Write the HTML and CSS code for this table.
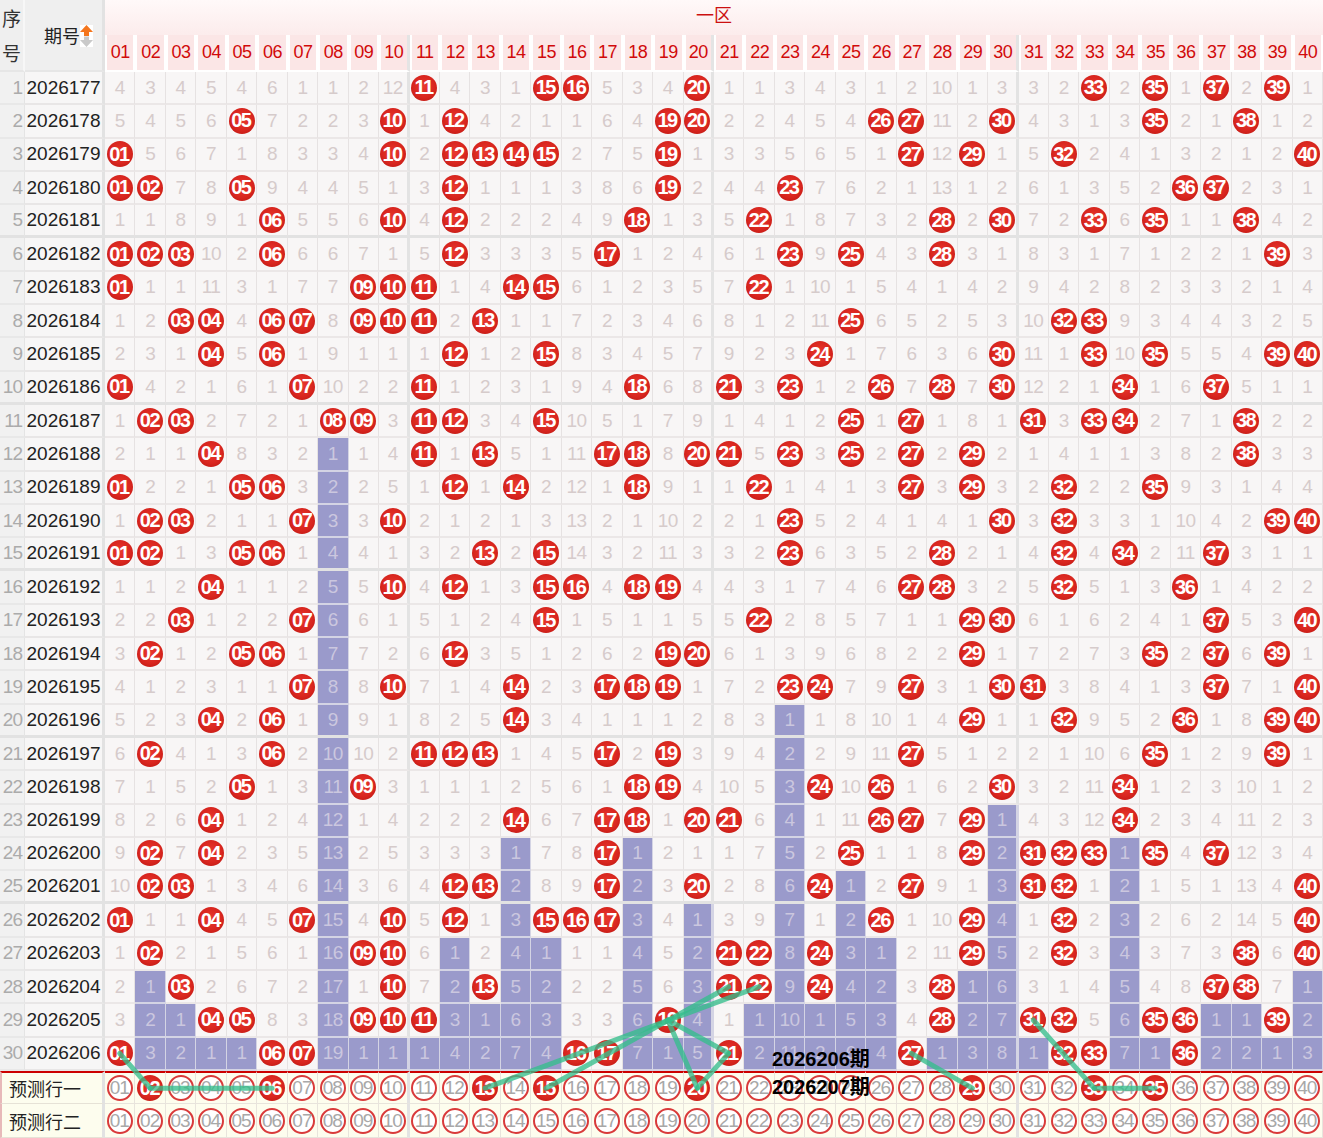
FILE: index.html
```html
<!DOCTYPE html>
<html lang="zh-CN">
<head>
<meta charset="utf-8">
<title>一区 走势图</title>
<link rel="stylesheet" href="styles.css">
</head>
<body>
<div class="chart" id="chart">
  <div class="grid" id="grid">
    <div class="h-seq"><span>序</span><span>号</span></div>
    <div class="h-issue"><span class="h-issue-text">期号</span><svg class="sort" width="13" height="22" viewBox="0 0 13 22"><rect x="0" y="0" width="13" height="22" fill="#ffffff"/><path d="M6.5 0 L13 7 L9 7 L9 11 L4 11 L4 7 L0 7 Z" fill="#f4761e"/><path d="M4 11.5 L9 11.5 L9 15 L13 15 L6.5 22 L0 15 L4 15 Z" fill="#c9c9c9"/></svg></div>
    <div class="h-zone">一区</div>
  </div>
  <svg class="lines" id="lines" width="1323" height="1138"></svg>
  <div class="note"><span>2026206期</span><span>2026207期</span></div>
</div>
<script src="script.js"></script>
</body>
</html>
```
FILE: styles.css
```css
html, body {
  margin: 0;
  padding: 0;
  background: #ffffff;
  overflow: hidden;
}

.chart {
  position: relative;
  width: 1323px;
  height: 1138px;
  font-family: "Liberation Sans", "Noto Sans CJK SC", sans-serif;
}

.grid {
  display: grid;
  width: 1323px;
  grid-template-columns: 25px 80px repeat(40, 1fr);
  grid-template-rows: 35px 37px repeat(30, 33.3px) 33.5px 33.5px;
}

.grid > div {
  box-sizing: border-box;
  display: flex;
  align-items: center;
  justify-content: center;
  overflow: hidden;
  white-space: nowrap;
}

/* header */
.h-seq {
  grid-row: span 2;
  flex-direction: column;
  background: #efefef;
  border-right: 2px solid #f7f7f7;
  border-bottom: 2px solid #e6e6e6;
  font-family: "Noto Sans CJK SC", sans-serif;
  font-size: 19px;
  line-height: 35px;
  color: #333;
}

.h-issue {
  grid-row: span 2;
  justify-content: flex-start !important;
  padding-left: 19px;
  background: #efefef;
  border-right: 3px solid #e2e2e2;
  border-bottom: 2px solid #e6e6e6;
  font-family: "Noto Sans CJK SC", sans-serif;
  font-size: 18px;
  color: #222;
}

.h-issue-text {
  line-height: 22px;
}

.sort {
  margin-left: 0;
  margin-top: 1px;
}

.h-zone {
  grid-column: span 40;
  align-items: flex-start !important;
  padding-top: 2px;
  background: linear-gradient(to bottom, #fff9f9, #fcecec);
  font-family: "Noto Sans CJK SC", sans-serif;
  font-size: 18px;
  line-height: 24px;
  color: #cc1010;
}

.h-num {
  background: #fbe6e6;
  border-left: 2px solid #ffffff;
  border-right: 2px solid #ffffff;
  border-bottom: 2px solid #ffffff;
  font-size: 18px;
  color: #d10a0a;
  letter-spacing: -0.5px;
}

.h-num.g10 {
  border-right: 3px solid #e4e4e4;
}

/* data rows */
.seq {
  justify-content: flex-end !important;
  padding-right: 2px;
  background: #f1f1f1;
  border-right: 1px solid #e4e4e4;
  border-bottom: 2px solid #e8e8e8;
  font-size: 19px;
  letter-spacing: -1px;
  color: #ababab;
}

.iss {
  background: #f7f6f6;
  border-right: 3px solid #e2e2e2;
  border-bottom: 2px solid #e8e6e6;
  font-size: 19px;
  color: #222;
}

.cell {
  background: #f8f6f6;
  border-right: 1px solid #e6e2e2;
  border-bottom: 2px solid #ebe7e7;
  font-size: 19px;
  letter-spacing: -0.5px;
  color: #d6cbcb;
}

.cell.g10,
.pcell.g10 {
  border-right: 3px solid #e3e3e3;
}

.r5 {
  border-bottom: 3px solid #e2e2e2 !important;
}

.cell.miss {
  background: #9a9acb;
  border-right-color: #d4d4e4;
  border-bottom-color: #d4d4e4;
  color: #cbc7df;
}

.ball {
  display: flex;
  align-items: center;
  justify-content: center;
  flex: none;
  width: 26px;
  height: 26px;
  border-radius: 50%;
  background: radial-gradient(circle at 50% 45%, #e8392f 0%, #d9261f 55%, #b5130f 100%);
  color: #ffffff;
  font-weight: bold;
  font-size: 20px;
  letter-spacing: -1.5px;
  text-indent: -1.5px;
}

/* prediction rows */
.plabel {
  grid-column: span 2;
  justify-content: flex-start !important;
  padding-left: 7px;
  background: #fdfdee;
  border-left: 2px solid #e7b9b9;
  border-right: 3px solid #e2e2e2;
  border-bottom: 1px solid #e6e2d6;
  font-family: "Noto Sans CJK SC", sans-serif;
  font-size: 18px;
  color: #222;
}

.pcell {
  background: #fdfdee;
  border-right: 1px solid #e8e4dc;
  border-bottom: 1px solid #e8e4dc;
}

.p1 {
  border-top: 2px solid #cc0000;
}

.ring {
  display: flex;
  align-items: center;
  justify-content: center;
  flex: none;
  box-sizing: border-box;
  width: 26px;
  height: 26px;
  border-radius: 50%;
  border: 2px solid #d93a3a;
  background: #ffffff;
  font-size: 19px;
  letter-spacing: -1px;
  text-indent: -1px;
  color: #a8a8a8;
}

/* overlays */
.lines {
  position: absolute;
  left: 0;
  top: 0;
  pointer-events: none;
}

.trend {
  stroke: rgba(52, 190, 140, 0.78);
  stroke-width: 5;
  stroke-linecap: round;
}

.note {
  position: absolute;
  left: 772px;
  top: 1045px;
  display: flex;
  flex-direction: column;
  font-family: "Liberation Sans", "Noto Sans CJK SC", sans-serif;
  font-weight: bold;
  font-size: 20px;
  line-height: 28px;
  color: #000;
}
```
FILE: script.js
```js
(function () {
  var init = [4,3,4,5,4,6,1,1,2,12,0,4,3,1,0,0,5,3,4,0,1,1,3,4,3,1,2,10,1,3,3,2,0,2,0,1,0,2,0,1];
  var hits = [
    [11,15,16,20,33,35,37,39],
    [5,10,12,19,20,26,27,30,35,38],
    [1,10,12,13,14,15,19,27,29,32,40],
    [1,2,5,12,19,23,36,37],
    [6,10,12,18,22,28,30,33,35,38],
    [1,2,3,6,12,17,23,25,28,39],
    [1,9,10,11,14,15,22],
    [3,4,6,7,9,10,11,13,25,32,33],
    [4,6,12,15,24,30,33,35,39,40],
    [1,7,11,18,21,23,26,28,30,34,37],
    [2,3,8,9,11,12,15,25,27,31,33,34,38],
    [4,11,13,17,18,20,21,23,25,27,29,38],
    [1,5,6,12,14,18,22,27,29,32,35],
    [2,3,7,10,23,30,32,39,40],
    [1,2,5,6,13,15,23,28,32,34,37],
    [4,10,12,15,16,18,19,27,28,32,36],
    [3,7,15,22,29,30,37,40],
    [2,5,6,12,19,20,29,35,37,39],
    [7,10,14,17,18,19,23,24,27,30,31,37,40],
    [4,6,14,29,32,36,39,40],
    [2,6,11,12,13,17,19,27,35,39],
    [5,9,18,19,24,26,30,34],
    [4,14,17,18,20,21,26,27,29,34],
    [2,4,17,25,29,31,32,33,35,37],
    [2,3,12,13,17,20,24,27,31,32,40],
    [1,4,7,10,12,15,16,17,26,29,32,40],
    [2,9,10,21,22,24,29,32,38,40],
    [3,10,13,21,22,24,28,37,38],
    [4,5,9,10,11,19,28,31,32,35,36,39],
    [1,6,7,16,17,21,27,32,33,36]
  ];
  var pred = [2,6,13,15,20,29,33,35];

  var grid = document.getElementById('grid');
  function pad(n) { return (n < 10 ? '0' : '') + n; }
  function add(cls, txt) {
    var d = document.createElement('div');
    d.className = cls;
    if (txt !== undefined) d.textContent = txt;
    grid.appendChild(d);
    return d;
  }
  function g10(c) { return (c % 10 === 0 && c < 40) ? ' g10' : ''; }

  for (var c = 1; c <= 40; c++) add('h-num' + g10(c), pad(c));

  var sets = hits.map(function (h) { var s = {}; h.forEach(function (n) { s[n] = true; }); return s; });
  var last = [];
  for (c = 1; c <= 40; c++) last[c] = 0;
  hits.forEach(function (h, r) { h.forEach(function (n) { last[n] = r + 1; }); });

  var prev = [];
  var balls = {};
  for (var r = 1; r <= 30; r++) {
    var rb = (r % 5 === 0 && r < 30) ? ' r5' : '';
    add('seq' + rb, String(r));
    add('iss' + rb, String(2026176 + r));
    for (c = 1; c <= 40; c++) {
      var d = add('cell' + rb + g10(c));
      if (sets[r - 1][c]) {
        var b = document.createElement('span');
        b.className = 'ball';
        b.textContent = pad(c);
        d.appendChild(b);
        balls[r + '-' + c] = b;
        prev[c] = 0;
      } else {
        var v = (r === 1) ? init[c - 1] : prev[c] + 1;
        prev[c] = v;
        d.textContent = String(v);
        if (r > last[c]) d.classList.add('miss');
      }
    }
  }

  var predSet = {};
  pred.forEach(function (n) { predSet[n] = true; });
  [['预测行一', predSet, ' p1'], ['预测行二', {}, '']].forEach(function (row, i) {
    add('plabel' + row[2], row[0]);
    for (var c2 = 1; c2 <= 40; c2++) {
      var d2 = add('pcell' + row[2] + g10(c2));
      var s = document.createElement('span');
      s.className = row[1][c2] ? 'ball' : 'ring';
      s.textContent = pad(c2);
      d2.appendChild(s);
      balls[(31 + i) + '-' + c2] = s;
    }
  });

  var segs = [
    [30,1,31,2],[31,2,31,6],[31,13,28,22],[31,15,28,21],
    [29,19,31,20],[29,19,30,21],[30,21,31,20],[30,27,31,29],
    [29,31,31,33],[31,33,31,35]
  ];
  var svg = document.getElementById('lines');
  var base = document.getElementById('chart').getBoundingClientRect();
  function ctr(r, c) {
    var el = balls[r + '-' + c];
    var bb = el.getBoundingClientRect();
    return [bb.left + bb.width / 2 - base.left, bb.top + bb.height / 2 - base.top];
  }
  segs.forEach(function (sg) {
    var a = ctr(sg[0], sg[1]), z = ctr(sg[2], sg[3]);
    var l = document.createElementNS('http://www.w3.org/2000/svg', 'line');
    l.setAttribute('x1', a[0].toFixed(1));
    l.setAttribute('y1', a[1].toFixed(1));
    l.setAttribute('x2', z[0].toFixed(1));
    l.setAttribute('y2', z[1].toFixed(1));
    l.setAttribute('class', 'trend');
    svg.appendChild(l);
  });
})();
```
